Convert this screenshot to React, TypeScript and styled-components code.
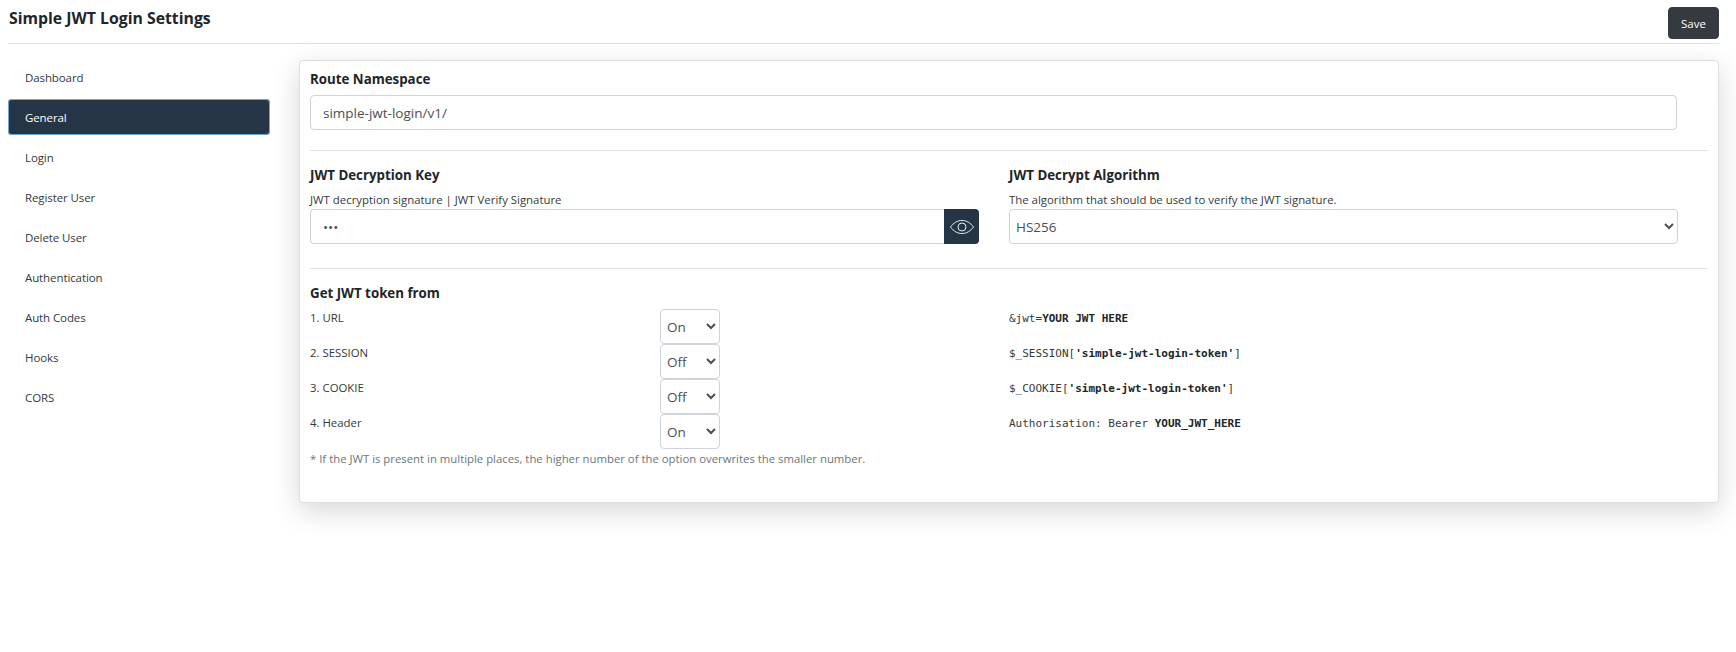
import React from 'react';
import styled, { createGlobalStyle } from 'styled-components';

const GlobalStyle = createGlobalStyle`
  html, body {
    margin: 0;
    padding: 0;
    background: #fff;
  }
  body {
    font-family: "Open Sans", "Noto Sans", sans-serif;
    color: #212529;
  }
`;

const Page = styled.div`
  box-sizing: border-box;
  min-height: 652px;
  padding: 0 17px 0 8px;
`;

const Header = styled.header`
  display: flex;
  justify-content: space-between;
  height: 43px;
  border-bottom: 1px solid #dee2e6;
`;

const Title = styled.h1`
  margin: 8px 0 0 1px;
  font-size: 15.8px;
  line-height: 21px;
  font-weight: 700;
`;

const SaveButton = styled.button`
  width: 51px;
  height: 32px;
  margin-top: 7px;
  padding: 0;
  background: #343a40;
  color: #fff;
  border: 1px solid #343a40;
  border-radius: 4px;
  font: 400 11.5px "Open Sans", sans-serif;
`;

const Body = styled.div`
  display: flex;
  align-items: flex-start;
  padding-top: 16px;
`;

const Sidebar = styled.nav`
  width: 262px;
  flex: none;
  margin-right: 29px;
  margin-top: -1px;
  display: flex;
  flex-direction: column;
  gap: 4px;
`;

const NavItem = styled.a<{ $active?: boolean }>`
  display: flex;
  align-items: center;
  height: 36px;
  padding-left: 17px;
  box-sizing: border-box;
  font-size: 11.5px;
  letter-spacing: -0.1px;
  border-radius: 4px;
  color: ${(p) => (p.$active ? '#fff' : '#343a40')};
  background: ${(p) => (p.$active ? '#253545' : 'transparent')};
  box-shadow: ${(p) => (p.$active ? 'inset 0 0 0 1px #6ea8d8' : 'none')};
`;

const Card = styled.main`
  flex: 1;
  box-sizing: border-box;
  height: 443px;
  padding: 9px 10px 0;
  background: #fff;
  border: 1px solid #dfdfdf;
  border-radius: 4px;
  box-shadow: 0 8px 28px rgba(0, 0, 0, 0.16);
`;

const Heading = styled.h2`
  margin: 0;
  font-size: 13.3px;
  line-height: 19px;
  font-weight: 700;
`;

const TextInput = styled.input`
  display: block;
  box-sizing: border-box;
  width: 100%;
  height: 35px;
  padding: 0 12px;
  border: 1px solid #ced4da;
  border-radius: 4px;
  background: #fff;
  color: #495057;
  font: 400 13.5px "Open Sans", sans-serif;
  outline: none;
`;

const Divider = styled.hr<{ $top: number; $bottom: number }>`
  margin: ${(p) => p.$top}px 0 ${(p) => p.$bottom}px;
  border: 0;
  border-top: 1px solid #e3e3e3;
`;

const RouteField = styled.div`
  width: 1367px;
  margin-top: 6px;
`;

const Columns = styled.div`
  display: grid;
  grid-template-columns: 699px 699px;
`;

const Column = styled.div`
  padding-right: 30px;
`;

const Help = styled.div`
  margin-top: 7px;
  height: 17px;
  font-size: 11.4px;
  line-height: 16px;
  color: #343a40;
`;

const InputGroup = styled.div`
  display: flex;
`;

const KeyInput = styled(TextInput)`
  flex: 1;
  border-right: 0;
  border-radius: 4px 0 0 4px;
`;

const EyeButton = styled.button`
  flex: none;
  width: 35px;
  height: 35px;
  padding: 0;
  display: flex;
  align-items: center;
  justify-content: center;
  background: #253545;
  border: 0;
  border-radius: 0 4px 4px 0;
`;

const Select = styled.select`
  display: block;
  box-sizing: border-box;
  width: 100%;
  height: 35px;
  padding: 0 2px;
  border: 1px solid #ced4da;
  border-radius: 4px;
  background-color: #fff;
  color: #495057;
  font: 400 13.5px "Open Sans", sans-serif;
  outline: none;
`;

const TokenSelect = styled(Select)`
  width: 60px;
`;

const TokenGrid = styled.div`
  display: grid;
  grid-template-columns: 699px 699px;
  margin-top: 6px;
`;

const TokenRow = styled.div`
  display: grid;
  grid-template-columns: 350px 60px;
  height: 35px;
`;

const TokenLabel = styled.div`
  font-size: 11.4px;
  line-height: 16px;
  padding-top: 1px;
  color: #343a40;
`;

const Code = styled.div`
  height: 35px;
  padding-top: 2px;
  box-sizing: border-box;
  font: 400 11px/16px "DejaVu Sans Mono", monospace;
  color: #343a40;
  b {
    color: #212529;
  }
`;

const Note = styled.div`
  margin-top: 2px;
  font-size: 11.35px;
  line-height: 16px;
  color: #6c757d;
`;

const navItems = [
  'Dashboard',
  'General',
  'Login',
  'Register User',
  'Delete User',
  'Authentication',
  'Auth Codes',
  'Hooks',
  'CORS',
];

const tokens = [
  { label: '1. URL', value: 'On' },
  { label: '2. SESSION', value: 'Off' },
  { label: '3. COOKIE', value: 'Off' },
  { label: '4. Header', value: 'On' },
];

const EyeIcon = () => (
  <svg width="26" height="16" viewBox="0 0 26 16" fill="none" stroke="#e9ecef" strokeWidth="1">
    <path d="M1.5 8C4.5 3.8 8.5 1.5 13 1.5S21.500 3.8 24.500 8C21.500 12.200 17.500 14.500 13 14.500S4.500 12.200 1.500 8Z" />
    <circle cx="13" cy="8" r="4" />
  </svg>
);

const App = () => {
  return (
    <Page>
      <GlobalStyle />
      <Header>
        <Title>Simple JWT Login Settings</Title>
        <SaveButton type="button">Save</SaveButton>
      </Header>
      <Body>
        <Sidebar>
          {navItems.map((item) => (
            <NavItem key={item} $active={item === 'General'}>
              {item}
            </NavItem>
          ))}
        </Sidebar>
        <Card>
          <Heading>Route Namespace</Heading>
          <RouteField>
            <TextInput readOnly value="simple-jwt-login/v1/" />
          </RouteField>
          <Divider $top={20} $bottom={15} />
          <Columns>
            <Column>
              <Heading>JWT Decryption Key</Heading>
              <Help>JWT decryption signature | JWT Verify Signature</Help>
              <InputGroup>
                <KeyInput readOnly type="password" value="123" />
                <EyeButton type="button" aria-label="Show key">
                  <EyeIcon />
                </EyeButton>
              </InputGroup>
            </Column>
            <Column>
              <Heading>JWT Decrypt Algorithm</Heading>
              <Help>The algorithm that should be used to verify the JWT signature.</Help>
              <Select defaultValue="HS256">
                <option>HS256</option>
                <option>HS384</option>
                <option>HS512</option>
              </Select>
            </Column>
          </Columns>
          <Divider $top={24} $bottom={15} />
          <Heading>Get JWT token from</Heading>
          <TokenGrid>
            <div>
              {tokens.map((token) => (
                <TokenRow key={token.label}>
                  <TokenLabel>{token.label}</TokenLabel>
                  <TokenSelect defaultValue={token.value}>
                    <option>On</option>
                    <option>Off</option>
                  </TokenSelect>
                </TokenRow>
              ))}
            </div>
            <div>
              <Code>&amp;jwt=<b>YOUR JWT HERE</b></Code>
              <Code>$_SESSION[<b>'simple-jwt-login-token'</b>]</Code>
              <Code>$_COOKIE[<b>'simple-jwt-login-token'</b>]</Code>
              <Code>Authorisation: Bearer <b>YOUR_JWT_HERE</b></Code>
            </div>
          </TokenGrid>
          <Note>* If the JWT is present in multiple places, the higher number of the option overwrites the smaller number.</Note>
        </Card>
      </Body>
    </Page>
  );
};

export default App;
